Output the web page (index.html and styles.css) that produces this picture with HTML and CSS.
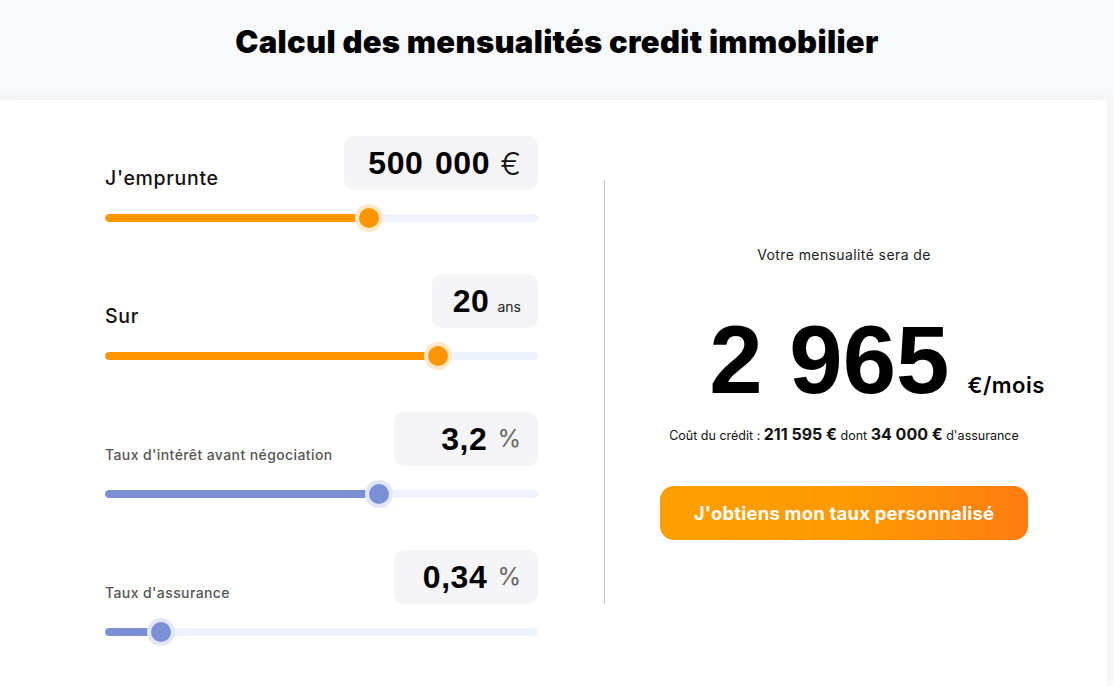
FILE: index.html
```html
<!DOCTYPE html>
<html lang="fr">
<head>
<meta charset="utf-8">
<title>Calcul des mensualités credit immobilier</title>
<link rel="stylesheet" href="styles.css">
</head>
<body>
<header class="page-header">
  <h1 class="page-title">Calcul des mensualités credit immobilier</h1>
</header>
<main class="card">
  <section class="inputs">
    <div class="field">
      <div class="field-head">
        <span class="label label-lg">J'emprunte</span>
        <div class="value-box"><span class="num">500 000</span><span class="unit unit-euro">€</span></div>
      </div>
      <div class="slider orange">
        <div class="track"><div class="fill" style="width:61%"></div></div>
        <div class="thumb" style="left:61%"></div>
      </div>
    </div>
    <div class="field">
      <div class="field-head">
        <span class="label label-lg">Sur</span>
        <div class="value-box value-box-sm"><span class="num">20</span><span class="unit unit-ans">ans</span></div>
      </div>
      <div class="slider orange">
        <div class="track"><div class="fill" style="width:77%"></div></div>
        <div class="thumb" style="left:77%"></div>
      </div>
    </div>
    <div class="field">
      <div class="field-head">
        <span class="label label-sm">Taux d'intérêt avant négociation</span>
        <div class="value-box"><span class="num">3,2</span><span class="unit unit-pct">%</span></div>
      </div>
      <div class="slider blue">
        <div class="track"><div class="fill" style="width:63.3%"></div></div>
        <div class="thumb" style="left:63.3%"></div>
      </div>
    </div>
    <div class="field">
      <div class="field-head">
        <span class="label label-sm">Taux d'assurance</span>
        <div class="value-box"><span class="num">0,34</span><span class="unit unit-pct">%</span></div>
      </div>
      <div class="slider blue">
        <div class="track"><div class="fill" style="width:12.9%"></div></div>
        <div class="thumb" style="left:12.9%"></div>
      </div>
    </div>
  </section>
  <div class="divider"></div>
  <section class="result">
    <p class="result-intro">Votre mensualité sera de</p>
    <div class="result-amount"><span class="amount">2 965</span><span class="amount-unit">€/mois</span></div>
    <p class="result-cost">Coût du crédit : <strong>211 595 €</strong> dont <strong>34 000 €</strong> d'assurance</p>
    <button class="cta" type="button">J'obtiens mon taux personnalisé</button>
  </section>
</main>
</body>
</html>
```

FILE: styles.css
```css
* { box-sizing: border-box; }

html, body {
  margin: 0;
  padding: 0;
}

body {
  background: #f8f9fb;
  font-family: "Inter", "Noto Sans", sans-serif;
  color: #111;
  height: 686px;
  overflow: hidden;
}

.page-header {
  height: 100px;
  display: flex;
  justify-content: center;
  padding-top: 23px;
}

.page-title {
  margin: 0;
  font-size: 31px;
  line-height: 38px;
  font-weight: 900;
  letter-spacing: 0.3px;
  color: #000;
}

.card {
  width: 1107px;
  height: 586px;
  background: #fff;
  box-shadow: 0 -3px 10px rgba(0, 0, 0, 0.035);
  display: flex;
  padding: 36px 24px 0 105px;
}

.inputs {
  width: 433px;
  flex: none;
  display: flex;
  flex-direction: column;
}

.field {
  flex: none;
  height: 138px;
}

.field-head {
  display: flex;
  justify-content: space-between;
  align-items: flex-end;
  height: 54px;
}

.label {
  font-weight: 500;
}

.label-lg {
  font-size: 19.5px;
  line-height: 22px;
  letter-spacing: 0.7px;
  color: #111;
  padding-bottom: 1px;
}

.label-sm {
  font-size: 14px;
  line-height: 18px;
  letter-spacing: 0.4px;
  color: #555;
  padding-bottom: 2px;
}

.value-box {
  height: 54px;
  min-width: 144px;
  padding: 0 17px 0 24px;
  background: #f5f5f7;
  border-radius: 10px;
  display: flex;
  justify-content: flex-end;
  align-items: center;
  gap: 10px;
}

.value-box-sm {
  min-width: 0;
  padding-left: 21px;
  gap: 8px;
}

.num {
  font-family: "Liberation Sans", Arial, sans-serif;
  font-weight: 700;
  font-size: 32px;
  line-height: 1;
  letter-spacing: 0.6px;
  word-spacing: 2px;
  color: #000;
}

.unit {
  font-family: "Inter", "Noto Sans", sans-serif;
  line-height: 1;
}

.unit-euro {
  font-size: 31px;
  font-weight: 300;
  color: #111;
}

.unit-ans {
  font-size: 14px;
  color: #222;
  align-self: center;
  margin-top: 12px;
}

.unit-pct {
  font-size: 24px;
  color: #666;
  font-weight: 400;
}

.slider {
  position: relative;
  height: 28px;
  margin-top: 14px;
}

.track {
  position: absolute;
  left: 0;
  right: 0;
  top: 10px;
  height: 8px;
  border-radius: 4px;
  background: #eef2fc;
  overflow: hidden;
}

.fill {
  height: 100%;
  border-radius: 4px;
}

.thumb {
  position: absolute;
  top: 14px;
  width: 20px;
  height: 20px;
  margin: -10px 0 0 -10px;
  border-radius: 50%;
}

.orange .fill { background: #ff9500; }
.orange .thumb {
  background: #ff9500;
  box-shadow: 0 0 0 4px #ffe8c7;
}

.blue .fill { background: #7b8fd4; }
.blue .thumb {
  background: #7b8fd4;
  box-shadow: 0 0 0 4px #e2e7f6;
}

.divider {
  flex: none;
  width: 1px;
  height: 424px;
  margin: 44px 0 0 66px;
  background: #c4c4c4;
}

.result {
  flex: 1;
  display: flex;
  flex-direction: column;
  align-items: center;
  padding-top: 110px;
}

.result-intro {
  margin: 0;
  font-size: 14px;
  line-height: 18px;
  letter-spacing: 0.4px;
  color: #222;
}

.result-amount {
  display: flex;
  align-items: baseline;
  margin-top: 46px;
  gap: 18px;
  padding-left: 66px;
}

.amount {
  font-family: "Liberation Sans", Arial, sans-serif;
  font-weight: 700;
  font-size: 96px;
  line-height: 100px;
  color: #000;
}

.amount-unit {
  font-size: 22px;
  font-weight: 600;
  letter-spacing: 0.5px;
  color: #000;
}

.result-cost {
  margin: 14px 0 0;
  font-size: 12.5px;
  line-height: 20px;
  color: #111;
}

.result-cost strong {
  font-size: 16px;
  font-weight: 700;
}

.cta {
  margin-top: 40px;
  width: 368px;
  height: 54px;
  border: 0;
  border-radius: 14px;
  background: linear-gradient(90deg, #ff9f00 0%, #ff9a00 50%, #ff7d12 100%);
  color: #fff;
  font-family: "Inter", "Noto Sans", sans-serif;
  font-weight: 700;
  font-size: 18.5px;
  letter-spacing: 0.2px;
  cursor: pointer;
}
```
